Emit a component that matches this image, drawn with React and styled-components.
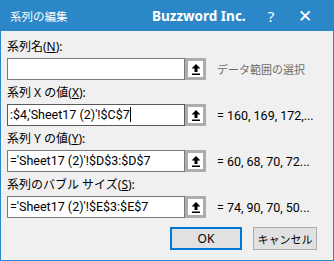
import React from 'react';
import styled, { createGlobalStyle } from 'styled-components';

const Global = createGlobalStyle`
  html, body { margin: 0; padding: 0; background: #fff; }
  * { box-sizing: border-box; }
`;

const FONT = `"Noto Sans", "Noto Sans CJK JP", sans-serif`;
const FIELD_FONT = `Roboto, "Noto Sans CJK JP", sans-serif`;

const Window = styled.div`
  width: 334px;
  height: 261px;
  border: 1px solid #2b87c8;
  border-top: none;
  background: #f0f0f0;
  font-family: ${FONT};
  display: flex;
  flex-direction: column;
`;

const TitleBar = styled.div`
  height: 31px;
  margin: 0 -1px;
  background: #2b87c8;
  color: #fff;
  display: flex;
  align-items: center;
  padding-left: 10px;
`;

const Title = styled.div`
  font-size: 11.5px;
  width: 142px;
`;

const Brand = styled.div`
  font-size: 13.5px;
  font-weight: bold;
  width: 110px;
`;

const TitleButton = styled.div`
  font-size: ${p => p.$size || 14}px;
  width: ${p => p.$w}px;
  text-align: center;
`;

const Body = styled.div`
  padding: 7px 0 0 6px;
  display: flex;
  flex-direction: column;
`;

const Field = styled.div`
  display: flex;
  flex-direction: column;
  gap: 2px;
  margin-bottom: 4px;
`;

const Label = styled.div`
  height: 18px;
  line-height: 18px;
  font-size: 12px;
  color: #000;
`;

const Row = styled.div`
  display: flex;
  align-items: center;
  height: 22px;
`;

const Input = styled.div`
  width: 178px;
  height: 22px;
  background: #fff;
  border: 1px solid ${p => (p.$focus ? '#5a5a5a' : '#7a7a7a')};
  font-family: ${FIELD_FONT};
  font-size: 12.5px;
  line-height: 20px;
  padding-left: 2px;
  white-space: nowrap;
  overflow: hidden;
  color: #000;
`;

const Caret = styled.span`
  display: inline-block;
  width: 1px;
  height: 15px;
  background: #000;
  vertical-align: -3px;
`;

const PickButton = styled.div`
  width: 21px;
  height: 22px;
  border: 3px solid #adadad;
  background: #fff;
  display: flex;
  align-items: center;
  justify-content: center;
`;

const Side = styled.div`
  margin-left: 11px;
  font-family: ${p => (p.$muted ? FONT : FIELD_FONT)};
  font-size: ${p => (p.$muted ? 11 : 12.5)}px;
  color: ${p => (p.$muted ? '#6d6d6d' : '#000')};
  white-space: nowrap;
`;

const Buttons = styled.div`
  display: flex;
  justify-content: flex-end;
  gap: 11px;
  margin-top: 5px;
  padding-right: 16px;
`;

const Button = styled.div`
  width: ${p => p.$w}px;
  height: 23px;
  background: #e1e1e1;
  border: ${p => (p.$primary ? '2px solid #0078d7' : '1px solid #adadad')};
  font-size: ${p => p.$size || 12}px;
  display: flex;
  align-items: center;
  justify-content: center;
  color: #000;
`;

const Arrow = () => (
  <svg width="10" height="11" viewBox="0 0 10 11">
    <path d="M5 0 L9.5 4.5 L6.5 4.5 L6.5 8 L3.5 8 L3.5 4.5 L0.5 4.5 Z" fill="#000" />
    <rect x="1" y="9.5" width="8" height="1.5" fill="#000" />
  </svg>
);

const fields = [
  { label: <>系列名(<u>N</u>):</>, value: '', side: 'データ範囲の選択', muted: true },
  { label: <>系列 X の値(<u>X</u>):</>, value: ":$4,'Sheet17 (2)'!$C$7", side: '= 160, 169, 172,...', focus: true },
  { label: <>系列 Y の値(<u>Y</u>):</>, value: "='Sheet17 (2)'!$D$3:$D$7", side: '= 60, 68, 70, 72...' },
  { label: <>系列のバブル サイズ(<u>S</u>):</>, value: "='Sheet17 (2)'!$E$3:$E$7", side: '= 74, 90, 70, 50...' },
];

export default function App() {
  return (
    <>
      <Global />
      <Window>
        <TitleBar>
          <Title>系列の編集</Title>
          <Brand>Buzzword Inc.</Brand>
          <TitleButton $w={18} $size={15}>?</TitleButton>
          <TitleButton $w={50} $size={17}>✕</TitleButton>
        </TitleBar>
        <Body>
          {fields.map((f, i) => (
            <Field key={i}>
              <Label>{f.label}</Label>
              <Row>
                <Input $focus={f.focus}>
                  {f.value}
                  {f.focus && <Caret />}
                </Input>
                <PickButton><Arrow /></PickButton>
                <Side $muted={f.muted}>{f.side}</Side>
              </Row>
            </Field>
          ))}
          <Buttons>
            <Button $primary $w={72}>OK</Button>
            <Button $w={64} $size={11}>キャンセル</Button>
          </Buttons>
        </Body>
      </Window>
    </>
  );
}
